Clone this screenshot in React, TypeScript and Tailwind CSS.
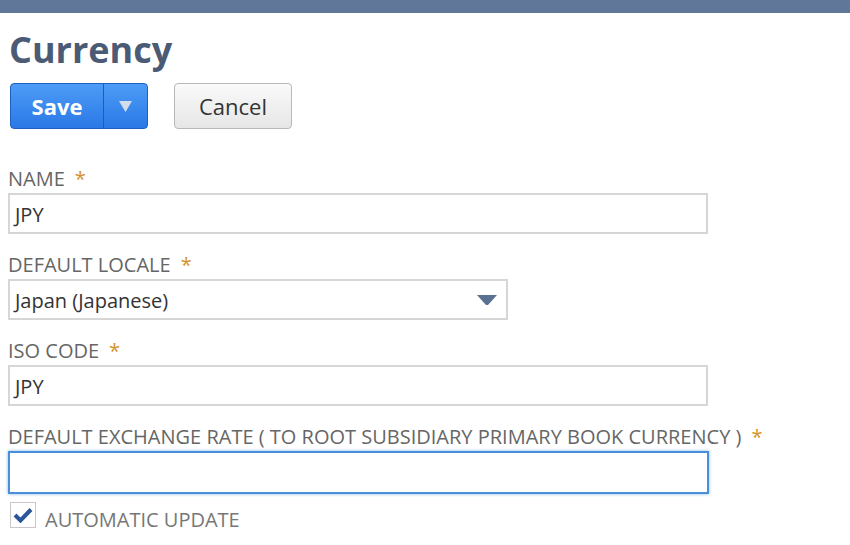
import React from 'react';

const Label: React.FC<{ text: string }> = ({ text }) => (
  <div className="h-[26px] leading-[30px] text-[20px] text-[#666] whitespace-nowrap">
    {text}
    <span className="ml-[10px] text-[#d4922a]">*</span>
  </div>
);

const TextField: React.FC<{ value?: string; focused?: boolean }> = ({ value, focused }) => (
  <div
    className={
      focused
        ? 'mt-[3px] h-[43px] w-[701px] border-2 border-[#4a90d9] bg-white shadow-[0_0_3px_#7fb0e6]'
        : 'mt-[3px] h-[41px] w-[700px] border-2 border-[#d6d6d6] bg-white px-[5px] text-[20px] leading-[40px] text-[#333]'
    }
  >
    {value}
  </div>
);

const App: React.FC = () => {
  return (
    <div className="h-[545px] w-[850px] overflow-hidden bg-white font-['Open_Sans',sans-serif]">
      {/* Top bar */}
      <div className="h-[13px] bg-[#607799]" />

      <div className="pl-[8px]">
        {/* Header */}
        <h1 className="ml-[1px] mt-[16px] h-[41px] text-[36px] font-bold leading-[42px] text-[#4b5b76]">
          Currency
        </h1>

        {/* Buttons */}
        <div className="ml-[2px] mt-[13px] flex items-center gap-[26px]">
          <div className="flex h-[46px] w-[138px] overflow-hidden rounded-[4px] border border-[#1d5fc4] bg-gradient-to-b from-[#4d9cf7] to-[#2a78e6]">
            <div className="flex w-[93px] items-center justify-center border-r border-[#1f5db8] text-[22px] font-bold text-white">
              Save
            </div>
            <div className="flex flex-1 items-center justify-center">
              <svg width="13" height="11" viewBox="0 0 13 11">
                <path d="M0 0 L13 0 L6.5 11 Z" fill="#d3dce8" />
              </svg>
            </div>
          </div>
          <div className="flex h-[46px] w-[118px] items-center justify-center rounded-[4px] border border-[#b8b8b8] bg-gradient-to-b from-[#fafafa] to-[#e6e6e6] text-[22px] text-[#333]">
            Cancel
          </div>
        </div>

        {/* Form */}
        <div className="mt-[35px]">
          <Label text="NAME" />
          <TextField value="JPY" />

          <div className="mt-[16px]">
            <Label text="DEFAULT LOCALE" />
            <div className="mt-[3px] flex h-[41px] w-[500px] items-center justify-between border-2 border-[#d6d6d6] bg-white pl-[5px] pr-[9px] text-[20px] text-[#333]">
              <span className="pt-[3px]">Japan (Japanese)</span>
              <svg width="20" height="10" viewBox="0 0 20 10">
                <path d="M0 0 L20 0 L11.5 9.5 Q10 10.5 8.5 9.5 Z" fill="#5a7192" />
              </svg>
            </div>
          </div>

          <div className="mt-[16px]">
            <Label text="ISO CODE" />
            <TextField value="JPY" />
          </div>

          <div className="mt-[16px]">
            <Label text="DEFAULT EXCHANGE RATE ( TO ROOT SUBSIDIARY PRIMARY BOOK CURRENCY )" />
            <TextField focused />
          </div>

          <div className="ml-[2px] mt-[8px] flex items-start gap-[9px]">
            <div className="flex h-[26px] w-[26px] items-center justify-center border border-[#c8c8c8] bg-white">
              <svg width="20" height="16" viewBox="0 0 20 16">
                <path d="M2 8 L7.5 13.5 L18 2.5" fill="none" stroke="#2b569a" strokeWidth="4" />
              </svg>
            </div>
            <span className="mt-[5px] text-[20px] leading-[26px] text-[#777]">AUTOMATIC UPDATE</span>
          </div>
        </div>
      </div>
    </div>
  );
};

export default App;
